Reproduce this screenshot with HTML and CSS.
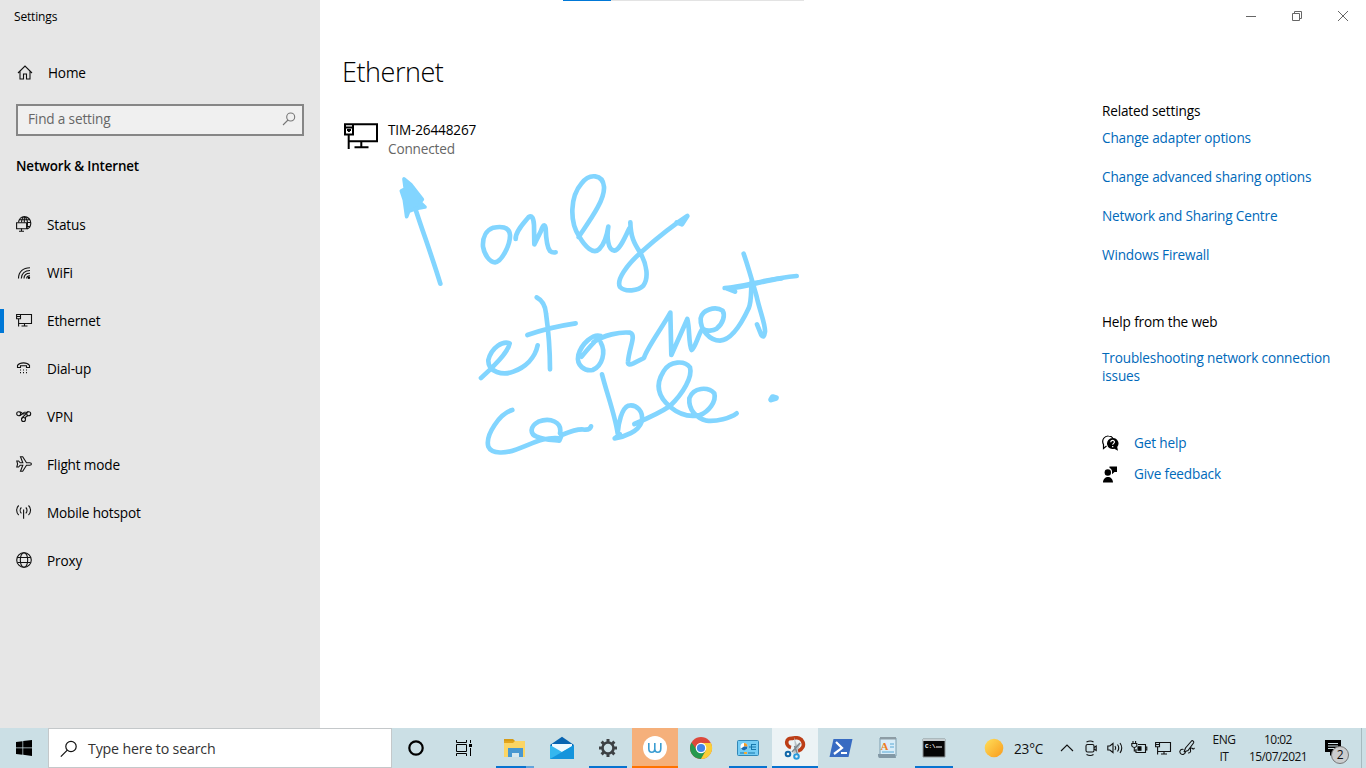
FILE: index.html
```html
<!DOCTYPE html>
<html lang="en">
<head>
<meta charset="utf-8">
<title>Settings</title>
<link rel="stylesheet" href="styles.css">
</head>
<body>
<div class="window">
  <aside class="side">
    <div class="app-title">Settings</div>
    <div class="home">
      <svg class="ic" viewBox="0 0 16 16"><path d="M1 8 8 1l7 7M3 6.500V14h3.500V9h3v5H13V6.500"/></svg>
      <span>Home</span>
    </div>
    <div class="find"><span>Find a setting</span>
      <svg width="14" height="14" viewBox="0 0 14 14"><circle cx="8.700" cy="5" r="4"/><path d="M6 8 1 13"/></svg>
    </div>
    <h2>Network &amp; Internet</h2>
    <nav>
      <a><svg class="ic" viewBox="0 0 16 16"><path d="M2.500 6.500C3 3 5.500.6 8.300.6a6.500 6.500 0 0 1 6.500 6.500c0 3-1.600 5.200-3.800 6M5.500 6.500C5.800 3 7 .8 8.300.8S11.500 4 11.500 7s-.2 4-.7 6M3.800 3.700H13M11 6.500h4M11 10.500h3M8.300.8v5.700"/><path class="screen" d="M.6 6.700h10v6H.6z"/><path d="M5.500 12.500V15M3 15.200h5"/></svg><span>Status</span></a>
      <a><svg class="ic" viewBox="0 0 16 16"><path d="M2.500 14.500C2.500 8 7 3.800 14 3.800M5.300 14.500C5.300 9.500 9 6.500 14 6.500M8 14.500C8 11 10.500 9.200 14 9.200M10.700 14.500c0-1.800 1-2.700 3.300-2.700"/><circle class="solid" cx="12.900" cy="13.700" r="1.200"/></svg><span>WiFi</span></a>
      <a class="active"><svg class="ic" viewBox="0 0 16 16"><path d="M5 2.500h10.500v9H3M8.500 11.500V14M5.500 14h6M.6 2.500H4.500v4.200H.6zM1 4.500h3M2.600 6.700V14.500"/></svg><span>Ethernet</span></a>
      <a><svg class="ic" viewBox="0 0 16 16"><path d="M1.500 7.500V5.400C4 2 11 2 13.500 5.400v2.100h-3V5.800h-6v1.700z"/><path class="dots" d="M4 10h1M7 10h1M10 10h1M4 12.700h1M7 12.700h1M10 12.700h1"/></svg><span>Dial-up</span></a>
      <a><svg class="ic" viewBox="0 0 16 16"><circle cx="2.700" cy="5.800" r="2"/><circle cx="12.700" cy="5.800" r="2"/><circle cx="7.500" cy="11.500" r="2"/><path d="M3.500 4C6 3.500 6 6.500 8 6s2.500-2.500 4.500-2.200M4 7.400C6.500 7 7 4 9.500 4M5.600 11C6 8.500 8.500 8 10.700 5.500M9.400 11C9.200 9 10.500 8 12 7.800"/></svg><span>VPN</span></a>
      <a><svg class="ic" viewBox="0 0 16 16"><path d="M.8 5h1.800l1.600 1.800h2.600L4.500.8h2.200l3.800 6h3.200c2.300 0 2.300 2.400 0 2.400h-3.200l-3.800 6H4.500l2.300-6H4.200L2.600 11H.8l.8-3z"/></svg><span>Flight mode</span></a>
      <a><svg class="ic" viewBox="0 0 16 16"><path d="M7.600 5.500v9.300M5.400 3.500c-1.600 1.600-1.600 4.200 0 5.800M9.800 3.500c1.600 1.600 1.600 4.200 0 5.800M2.700 1.500C0 4 0 8.500 2.700 11M12.500 1.500c2.700 2.500 2.700 7 0 9.500"/></svg><span>Mobile hotspot</span></a>
      <a><svg class="ic" viewBox="0 0 16 16"><circle cx="8" cy="8" r="7.300"/><ellipse cx="8" cy="8" rx="3.700" ry="7.300"/><path d="M1.500 5.500h13M1.500 10.500h13"/></svg><span>Proxy</span></a>
    </nav>
  </aside>

  <main>
    <div class="loading"><i></i></div>
    <h1>Ethernet</h1>
    <div class="conn">
      <svg width="36" height="28" viewBox="0 0 36 28"><path d="M11 2.200h23v17H6M18.300 19.500v5.500M11.500 25.300h14"/><path d="M2 2.200h8v10.300H2zM5.700 12.500V27M2 5.500h8"/><path d="M4 8h4M5.900 7v3"/></svg>
      <div><div class="conn-name">TIM-26448267</div><div class="conn-state">Connected</div></div>
    </div>
  </main>

  <section class="related">
    <div class="controls">
      <svg width="12" height="12" viewBox="0 0 12 12"><path d="M1 6.500h10"/></svg>
      <svg width="12" height="12" viewBox="0 0 12 12"><path d="M1.500 3.500h7v7h-7zM3.500 3.500v-2h7v7h-2"/></svg>
      <svg width="12" height="12" viewBox="0 0 12 12"><path d="m1 1 10 10M11 1 1 11"/></svg>
    </div>
    <h3>Related settings</h3>
    <a>Change adapter options</a>
    <a>Change advanced sharing options</a>
    <a>Network and Sharing Centre</a>
    <a>Windows Firewall</a>
    <h3 class="web">Help from the web</h3>
    <a class="trouble">Troubleshooting network connection<br>issues</a>
    <div class="support">
      <svg width="17" height="17" viewBox="0 0 17 17"><path d="M4.500 11 1.500 13.500V9.500C-1 4.500 3 .7 6.500 1c2 0 3.500.8 4.300 2" fill="none" stroke="#000" stroke-width="1.200"/><path d="M10.500 3a5.500 5.500 0 1 0 1.800 10.700l3.700 2-.8-3.700A5.500 5.500 0 0 0 10.500 3z"/><path d="M8.800 7.200c0-2.600 3.800-2.200 3.600 0-.1 1.200-1.700 1.200-1.700 2.600M10.700 11v1.300" fill="none" stroke="#fff" stroke-width="1.200"/></svg>
      <a>Get help</a>
    </div>
    <div class="support">
      <svg width="17" height="17" viewBox="0 0 17 17"><circle cx="5.800" cy="6.500" r="3.200"/><path d="M1 16.500c0-7.500 10-7.500 10 0zM7.500.5H15V6h-2.500L10 8.200V5C9.700 3.500 9 2.500 7.500 2z"/></svg>
      <a>Give feedback</a>
    </div>
  </section>

  <svg class="ink" viewBox="0 0 1366 728">
    <g transform="translate(390 165) scale(.33333)">
      <path d="M75 128 C100 205 128 280 151 356"/>
      <path class="head" d="M42 42 46 72 34 78 43 105 50 155 56 139 80 130 105 126 90 112 97 103 62 58Z"/>
      <path d="M310 188C290 195 277 215 279 245 283 270 300 292 315 292 335 290 361 240 360 210 358 183 330 184 310 188Z"/>
      <path d="M377 222C376 200 400 175 416 156Q430 148 432 180L433 238 452 200Q463 168 467 190C468 220 470 245 480 258Q487 264 497 262"/>
    </g>
    <g transform="translate(560 165) scale(.33333)">
      <path d="M56 216C90 165 135 105 132 65 128 27 88 24 65 55 30 95 28 170 58 215 75 245 100 270 118 252 135 235 142 205 145 185 140 215 143 255 163 257 180 255 195 215 208 190M211 172C212 215 222 235 240 262 262 300 266 340 250 362 235 378 195 382 180 366 168 345 200 300 245 260 290 220 340 180 382 153L366 178 350 172"/>
      <path d="M551 266C562 298 576 345 590 395 600 440 617 480 615 500Q612 522 604 510L591 478M494 369C560 365 620 340 710 333M500 370 525 380"/>
      <path d="M505 370C560 368 600 348 665 340"/>
    </g>
    <g transform="translate(470 280) scale(.33333)">
      <path d="M33 294C70 262 115 215 119 190 98 182 65 202 55 240 53 277 100 287 130 275 165 262 195 235 203 196"/>
      <path d="M200 52Q225 65 228 100C235 150 240 200 240 268M172 165C220 148 270 137 317 130"/>
      <path d="M335 230C355 205 372 185 392 168 370 160 335 190 325 225 318 258 345 274 368 270 398 257 408 215 392 187M370 187C400 165 450 155 480 158 500 165 478 200 474 245Q472 258 490 250L522 234C530 205 575 145 601 98L604 225 652 117C660 150 655 190 665 210 675 205 685 165 695 150"/>
      <path d="M700 147C710 155 730 152 740 146 760 130 766 105 758 92 735 77 696 90 692 115 690 150 720 182 750 182 790 180 822 115 836 85 846 60 842 30 845 5"/>
      <path d="M127 390C90 400 45 465 55 500 65 524 110 520 140 508 190 490 220 470 270 475M270 460C277 425 240 412 205 425 178 440 180 462 200 470 220 480 255 480 268 482L275 465C300 455 325 445 345 449Q360 450 363 439"/>
      <path d="M396 283C412 345 435 405 443 460 445 430 455 385 475 377 500 372 522 395 515 425 505 455 465 470 434 475L450 463M493 432C545 410 575 395 600 378 640 340 668 290 660 262 645 242 600 240 580 275 555 315 565 350 600 380 630 405 660 412 690 405 715 395 740 365 733 340 715 320 670 320 658 355 655 390 680 415 710 422 740 425 780 415 800 400"/>
      <path class="dot" d="m903 359 5-8 10 3z"/>
    </g>
  </svg>
</div>

<footer class="taskbar">
  <div class="start"><svg width="16" height="16" viewBox="0 0 16 16"><path d="m0 2 6.500-.8v6.300H0zM7.200 1.100 16 0v7.500H7.200zM0 8.300h6.500v6.400L0 13.900zM7.200 8.300H16V16l-8.800-1.200z"/></svg></div>
  <div class="search"><svg width="18" height="18" viewBox="0 0 18 18"><circle cx="11" cy="6.500" r="5.200"/><path d="m7.300 10.200-6.500 6.500"/></svg><span>Type here to search</span></div>
  <div class="plain"><svg width="16" height="16" viewBox="0 0 16 16"><circle cx="8" cy="8" r="6.700" fill="none" stroke="#000" stroke-width="2.200"/></svg></div>
  <div class="plain"><svg width="16" height="16" viewBox="0 0 16 16" fill="none" stroke="#000"><path d="M.5 0v2.500h10V0M.5 4.500h10v7H.5zM.5 16v-2.500h10V16M14.500 0v3M14.500 8v8"/><path d="M13 4h3v3h-3z" fill="#000" stroke="none"/></svg></div>
  <div class="apps">
    <div class="app run files"><svg viewBox="0 0 24 24"><path d="M1 3h9l2 2H1z" fill="#d69b16"/><path d="M1 5h21v16H1z" fill="#fbd564"/><path d="M1 5h11l-2 2H1z" fill="#e3a51c"/><path d="M5 12h15v9h-4v-4H9v4H5z" fill="#4898d1"/><path d="M9 17h7v4H9z" fill="#d7e8ee"/></svg></div>
    <div class="app"><svg viewBox="0 0 24 24"><path d="M0 9 12 .7 24 9v13H0z" fill="#0864b1"/><path d="M2 8h20v9H2z" fill="#eef9ff"/><path d="m0 9 12 7 12-7v14H0z" fill="#35b7ef"/><path d="M0 23 24 9v14z" fill="#1494dc"/></svg></div>
    <div class="app run"><svg viewBox="0 0 24 24" fill="none" stroke="#3d4144"><circle cx="12" cy="12" r="5.500" stroke-width="2.600"/><path d="M12 3v3.500M12 17.500V21M3 12h3.500M17.500 12H21M5.600 5.600 8.200 8.200M15.800 15.800l2.600 2.600M5.600 18.400l2.600-2.600M15.800 8.200l2.600-2.600" stroke-width="3"/></svg></div>
    <div class="app run orange"><svg viewBox="0 0 24 24"><circle cx="12" cy="12" r="12" fill="#fff"/><path d="M5.800 7v5.500c0 5 6 5 6 0V7v5.500c0 5 6 5 6 0V7" fill="none" stroke="#3b9dd2" stroke-width="1.600"/></svg></div>
    <div class="app"><svg viewBox="0 0 24 24"><circle cx="12" cy="12" r="11" fill="#dc483b"/><path d="M2.500 6.500A11 11 0 0 0 12 23l5-8-5-3-4 2z" fill="#26994e"/><path d="M12 23A11 11 0 0 0 22 7H12l5 7z" fill="#fbce38"/><circle cx="12" cy="12" r="5.300" fill="#fff"/><circle cx="12" cy="12" r="4.100" fill="#4285e8"/></svg></div>
    <div class="app run"><svg viewBox="0 0 24 24"><rect x="1.500" y="4.500" width="21" height="15" rx="1" fill="#75cdf5" stroke="#3187b7"/><circle cx="8" cy="10.500" r="3.500" fill="#fff"/><path d="M8 10.500V7A3.500 3.500 0 0 1 11.500 10.500z" fill="#f39b28"/><path d="M8 10.500h3.500A3.500 3.500 0 0 1 5 12.500z" fill="#176bb0"/><path d="M15 8.500h5M15 11h5M15 13.500h5M15.500 8v6M13 11h2M4 17h4M12 17h7" fill="none" stroke="#1879ad"/><path d="M8 17h3" stroke="#f5aa30" stroke-width="2"/></svg></div>
    <div class="app run selected"><svg viewBox="0 0 24 24"><path d="M10 2.500C2 1 2 10 8 11.500M9 2.500c11-4 16 9 6 12.500" fill="none" stroke="#bc3e17" stroke-width="3.600"/><path d="m11 1 3 8 4-2-4 9-4 2 2-7z" fill="#b9c1c5"/><path d="m17 7-8 9M11.500 10l3 8" stroke="#7d878d" stroke-width="1.500"/><circle cx="5" cy="18" r="2.300" fill="none" stroke="#1268a9" stroke-width="2"/><circle cx="13.500" cy="20.500" r="2.300" fill="none" stroke="#2a9adc" stroke-width="2"/></svg></div>
    <div class="app"><svg viewBox="0 0 24 24"><path d="M4.500 3H23.500l-4 18H.5z" fill="#376bc2"/><path d="m7 6 6 6-8 6M12 17h6" fill="none" stroke="#fff" stroke-width="2.200"/></svg></div>
    <div class="app"><svg viewBox="0 0 24 24"><path d="M4 2h16v18H4z" fill="#d9edf8" stroke="#7d9fb1"/><path d="M4 1h16v2.500H4z" fill="#8d9ca4"/><path d="M14 8h4M14 11h4M6 16h12" stroke="#58a8d5"/><text x="4.500" y="14" class="doc-a">A</text><path d="M2 18h17l1 4H4c-2 0-2-2-2-4z" fill="#8298a5"/></svg></div>
    <div class="app run"><svg viewBox="0 0 24 24"><path d="M1 3h22v18H1z" fill="#050505" stroke="#8b9294"/><path d="M1 3h22v2H1z" fill="#c5cccf"/><text x="3" y="12" class="prompt">C:\</text><path d="M14 11h6" stroke="#fff"/></svg></div>
  </div>
  <div class="tray">
    <svg class="sun" width="20" height="20" viewBox="0 0 20 20"><defs><linearGradient id="sun" x2="1" y2="1"><stop stop-color="#ffe05b"/><stop offset="1" stop-color="#f99a1c"/></linearGradient></defs><circle cx="10" cy="10" r="9.300" fill="url(#sun)"/></svg>
    <span class="temp">23°C</span>
    <div class="tray-icons">
      <svg viewBox="0 0 16 16"><path d="m2 11 6-6 6 6"/></svg>
      <svg viewBox="0 0 16 16"><rect x="3" y="4.500" width="8" height="7.500" rx="1.500"/><path d="m11 7.500 2.200-1.500v4.500L11 9M3.500 2q4-2 7 0M3.500 14.500q4 2 7 0"/></svg>
      <svg viewBox="0 0 16 16"><path d="M.8 6h2L6 3.500v9L2.800 10h-2zM8 6q1.500 2 0 4M10.500 4.500q2.500 3.500 0 7M13 3q3.500 5 0 10"/></svg>
      <svg viewBox="0 0 16 16"><path d="M7 4.500h7.500v8H5V9M14.500 7h1.300v3h-1.300M.8 3.500h5v2.500q-2.500 3-5 0zM2 1v2.500M4.600 1v2.500M3.300 7.500v3.500H5"/><path d="M7 6.700h3v3.600H7z" fill="#000"/></svg>
      <svg viewBox="0 0 16 16"><path d="M5 2.500h10.500v9H3M9 11.500V14M6 14h6M.6 2.500H4.500v4.200H.6zM1 4.500h3M2.600 6.700V14.500"/></svg>
      <svg viewBox="0 0 16 16"><path d="M4.500 9.500C2 8.500 0 11 1.200 13c1.500 2.500 5 1.500 5.300-1M5 12l1.500-4L12.500 1c1-1 3 .5 2 2L9 10.500 5 12M9 13c2 0 3-1 2.500-3s1-2.500 2-1.500 1.500 0 2-.5"/></svg>
    </div>
    <div class="stack lang"><span>ENG</span><span>IT</span></div>
    <div class="stack clock"><span class="time">10:02</span><span class="date">15/07/2021</span></div>
    <div class="notice"><svg width="18" height="18" viewBox="0 0 18 18"><path d="M1 1h16v12h-7l-4 4v-4H1z"/><path d="M4 4.500h10M4 7h10M4 9.500h7" stroke="#d0e1e6"/></svg><b>2</b></div>
  </div>
</footer>
</body>
</html>
```
FILE: styles.css
```css
* { box-sizing: border-box; }
body { margin: 0; width: 1366px; height: 768px; overflow: hidden; background: #fff; color: #000; font-family: "Open Sans", "Noto Sans", sans-serif; font-size: 13.6px; letter-spacing: -.16px; line-height: 18px; }
h1, h2, h3 { margin: 0; font-size: inherit; font-weight: 400; }
.window { position: relative; display: flex; height: 728px; }
.side { width: 320px; background: #e6e6e6; }
.app-title { padding: 8px 0 0 14px; height: 64px; font-size: 12px; }
.home { display: flex; align-items: center; gap: 15px; padding-left: 17px; height: 18px; }
.ic { width: 16px; height: 16px; fill: none; stroke: #111; stroke-width: 1.1; flex: none; overflow: visible; }
.ic .solid { fill: #000; stroke: none; }
.ic .screen { fill: #e6e6e6; }
.ic .dots { stroke-width: 1.2; }
.find { display: flex; align-items: center; justify-content: space-between; width: 288px; height: 32px; margin: 22px 0 0 16px; padding: 0 6px 2px 10px; border: 2px solid #868686; background: #f0f0f0; color: #666; }
.find svg { fill: none; stroke: #777; stroke-width: 1.1; }
h2 { margin: 21px 0 0 16px; font-weight: 600; font-size: 13.4px; }
nav { padding-top: 26px; }
nav a { display: flex; align-items: center; height: 48px; gap: 15px; padding-left: 16px; }
nav .ic { margin-top: -2px; }
nav .active { background: linear-gradient(#0078d7, #0078d7) 0 12px / 4px 24px no-repeat; }

main { width: 770px; padding-left: 22px; }
.loading { height: 1px; width: 241px; margin-left: 221px; background: #e3e3e3; }
.loading i { display: block; width: 48px; height: 1px; background: #0078d7; }
h1 { margin-top: 53px; font-size: 27px; line-height: 36px; font-weight: 300; letter-spacing: -.45px; }
.conn { display: flex; gap: 9px; margin-top: 30px; }
.conn svg { margin: 2px 0 0 1px; fill: none; stroke: #000; stroke-width: 2; }
.conn-name, .conn-state { line-height: 19px; }
.conn-state { color: #666; }

.related { flex: 1; padding-left: 12px; }
.related > a { display: block; margin-bottom: 21px; white-space: nowrap; }
.related a { color: #0069ba; }
.controls { display: flex; gap: 34px; height: 102px; padding: 10px 0 0 143px; }
.controls svg { fill: none; stroke: #666; }
h3 { margin-bottom: 9px; }
.related .web { margin: 49px 0 18px; }
.related .trouble { margin-bottom: 49px; }
.support { display: flex; align-items: center; gap: 15px; height: 18px; margin-bottom: 13px; }

.ink { position: absolute; inset: 0; width: 1366px; height: 728px; fill: none; stroke: #82d5ff; stroke-width: 14; stroke-linecap: round; stroke-linejoin: round; pointer-events: none; }
.ink .head { fill: #82d5ff; stroke-width: 11; }
.ink .dot { fill: #82d5ff; stroke-width: 17; }

.taskbar { display: flex; height: 40px; background: #cbdfe5; }
.start, .plain { display: flex; align-items: center; justify-content: center; width: 48px; }
.search { display: flex; align-items: center; gap: 10px; width: 344px; padding: 1px 0 0 11px; background: #fff; border: 1px solid #c4c8ca; color: #333; font-size: 14.2px; }
.search svg { fill: none; stroke: #111; stroke-width: 1.2; }
.apps { display: flex; gap: .6px; margin-left: 4px; width: 466px; }
.app { display: flex; align-items: center; justify-content: center; width: 46px; position: relative; }
.app svg { width: 24px; height: 24px; }
.run::after { content: ""; position: absolute; left: 4px; right: 4px; bottom: 0; height: 2px; background: #0873d0; }
.files::after { background: linear-gradient(90deg, #0873d0 30px, #62a4dc 30px); }
.orange { background: #f5b07b; }
.orange::after { background: #ff7200; left: 0; right: 0; }
.selected { background: #ecf3f5; }
.selected::after { left: 0; right: 0; }
.doc-a { font: bold 11px "Liberation Serif", serif; fill: #ee7d20; }
.prompt { font: bold 6px "Liberation Mono", monospace; fill: #fff; }
.tray { display: flex; align-items: center; flex: 1; padding-left: 26px; color: #111; }
.temp { width: 32px; margin-left: 10px; padding-top: 1px; letter-spacing: -.2px; white-space: nowrap; }
.tray-icons { display: flex; gap: 8px; margin-left: 13px; }
.tray-icons svg { width: 16px; height: 16px; fill: none; stroke: #111; stroke-width: 1.1; overflow: visible; }
.stack { display: flex; flex-direction: column; align-items: center; line-height: 17px; font-size: 12px; white-space: nowrap; }
.lang { width: 26px; margin-left: 16px; letter-spacing: -.45px; }
.clock { width: 60px; margin-left: 11px; letter-spacing: -.55px; }
.notice { position: relative; display: flex; width: 38px; height: 40px; margin-left: 16px; padding-top: 11px; border-right: 1px solid #a7babf; }
.notice b { position: absolute; left: 7px; top: 18px; width: 18px; height: 18px; border: 1px solid #777; border-radius: 50%; background: #cbcdce; text-align: center; font-weight: 400; font-size: 12px; line-height: 16px; }
```
